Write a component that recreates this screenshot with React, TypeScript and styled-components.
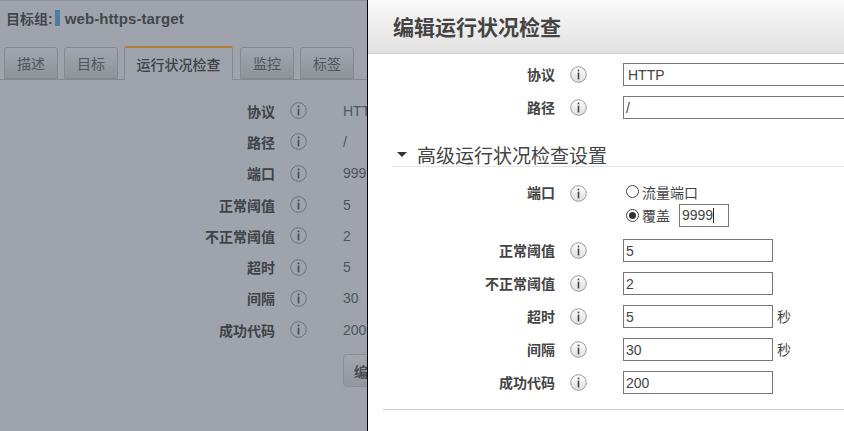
import React from 'react'
import styled, { createGlobalStyle } from 'styled-components'

const cjk = `"Liberation Sans", "Noto Sans CJK SC", sans-serif`

const Global = createGlobalStyle`
  html, body { margin: 0; padding: 0; }
  body { font-family: ${cjk}; background: #9fa4ac; overflow: hidden; }
`

const Screen = styled.div`
  position: relative;
  width: 844px;
  height: 431px;
  overflow: hidden;
  background: #9fa4ac;
`

const Page = styled.div`
  width: 367px;
  height: 431px;
  overflow: hidden;
  border-top: 1px solid #8e939b;
  box-sizing: border-box;
  color: #3e4146;
`

const GroupTitle = styled.div`
  display: flex;
  align-items: center;
  height: 34px;
  padding-left: 6px;
  font-size: 14px;
  font-weight: bold;
  color: #43464b;
`

const ColorChip = styled.span`
  width: 5px;
  height: 16px;
  margin: 0 5px 0 2px;
  background: #4f7ba3;
`

const GroupName = styled.span`
  font-size: 15px;
  letter-spacing: 0.1px;
`

const TabBar = styled.div`
  display: flex;
  align-items: flex-end;
  gap: 6px;
  width: 367px;
  height: 34px;
  margin-top: 11px;
  padding-left: 4px;
  box-sizing: border-box;
  border-bottom: 1px solid #84898f;
`

const Tab = styled.div<{ $active?: boolean }>`
  display: flex;
  align-items: center;
  justify-content: center;
  box-sizing: border-box;
  width: ${p => (p.$active ? '109px' : '54px')};
  height: ${p => (p.$active ? '34px' : '32px')};
  margin-bottom: ${p => (p.$active ? '-1px' : '0')};
  margin-right: ${p => (p.$active ? '1px' : '0')};
  font-size: 14px;
  font-weight: ${p => (p.$active ? 500 : 400)};
  color: ${p => (p.$active ? '#3e4146' : '#50545a')};
  background: ${p => (p.$active ? '#9fa4ac' : 'linear-gradient(#a1a6ae, #8f949b)')};
  border: 1px solid #84898f;
  border-top: ${p => (p.$active ? '2px solid #b07f35' : '1px solid #84898f')};
  border-bottom: ${p => (p.$active ? 'none' : '1px solid #84898f')};
  border-radius: 3px 3px 0 0;
`

const DetailList = styled.div`
  padding-top: 15px;
`

const DetailRow = styled.div`
  display: grid;
  grid-template-columns: 275px 46px 1fr;
  align-items: center;
  height: 31.3px;
`

const DetailLabel = styled.div`
  text-align: right;
  font-size: 14px;
  font-weight: bold;
  color: #3f4247;
`

const IconCell = styled.div`
  display: flex;
  justify-content: center;
`

const DetailValue = styled.div`
  padding-left: 22px;
  font-size: 14px;
  color: #50545a;
  white-space: nowrap;
`

const EditButton = styled.div`
  display: flex;
  align-items: center;
  box-sizing: border-box;
  width: 60px;
  height: 33px;
  margin: 9px 0 0 343px;
  padding-left: 10px;
  font-size: 14px;
  font-weight: bold;
  white-space: nowrap;
  color: #4a4d52;
  background: linear-gradient(#a3a8b0, #92979e);
  border: 1px solid #8a8f96;
  border-radius: 4px;
`

const Drawer = styled.div`
  position: absolute;
  top: 0;
  left: 367px;
  bottom: 0;
  width: 477px;
  box-sizing: border-box;
  background: #fff;
  border-left: 1px solid #000;
  overflow: hidden;
`

const DrawerHeader = styled.div`
  display: flex;
  align-items: center;
  box-sizing: border-box;
  height: 54px;
  padding: 0 0 2px 25px;
  background: linear-gradient(#fafafa, #e0e0e0);
  border-bottom: 1px solid #cfcfcf;
`

const DrawerTitle = styled.h1`
  margin: 0;
  font-size: 21px;
  font-weight: bold;
  color: #444;
`

const FormBlock = styled.div<{ $top?: number }>`
  padding-top: ${p => p.$top ?? 0}px;
`

const FormRow = styled.div`
  display: grid;
  grid-template-columns: 187px 46px 1fr;
  align-items: center;
  height: 33px;
`

const FormLabel = styled.div`
  padding-bottom: 2px;
  text-align: right;
  font-size: 14px;
  font-weight: bold;
  color: #444;
`

const FieldCell = styled.div`
  display: flex;
  align-items: center;
  gap: 4px;
  padding-left: 22px;
`

const TextField = styled.div<{ $wide?: boolean; $pad?: number }>`
  display: flex;
  align-items: center;
  box-sizing: border-box;
  flex: none;
  width: ${p => (p.$wide ? '260px' : '150px')};
  height: 23px;
  padding-left: ${p => p.$pad ?? 2}px;
  font-size: 14px;
  color: #444;
  background: #fff;
  border: 1px solid #767676;
`

const Unit = styled.span`
  padding-bottom: 2px;
  font-size: 14px;
  color: #444;
`

const SectionHead = styled.div`
  display: flex;
  align-items: center;
  gap: 10px;
  height: 26px;
  margin: 17px 0 0 25px;
  padding: 2px 0 0 4px;
  box-sizing: border-box;
  font-size: 19px;
  color: #444;
  border-bottom: 1px solid #e4e4e4;
`

const Triangle = styled.span`
  width: 0;
  height: 0;
  border-left: 5.5px solid transparent;
  border-right: 5.5px solid transparent;
  border-top: 5px solid #333;
`

const PortRow = styled.div`
  display: grid;
  grid-template-columns: 187px 46px 1fr;
  height: 55px;
  margin-top: 12px;
`

const PortLabel = styled(FormLabel)`
  padding: 3px 0 0;
`

const PortIconCell = styled(IconCell)`
  padding-top: 6px;
`

const RadioStack = styled.div`
  display: flex;
  flex-direction: column;
  padding: 1px 0 0 25px;
`

const RadioLine = styled.div<{ $short?: boolean }>`
  display: flex;
  align-items: center;
  gap: 3px;
  height: ${p => (p.$short ? '23px' : '24px')};
  font-size: 14px;
  color: #444;
`

const RadioDot = styled.span<{ $on?: boolean }>`
  position: relative;
  box-sizing: border-box;
  width: 13px;
  height: 13px;
  border: 1px solid #444;
  border-radius: 50%;
  background: #fff;

  &::after {
    content: '';
    display: ${p => (p.$on ? 'block' : 'none')};
    position: absolute;
    inset: 2px;
    border-radius: 50%;
    background: #333;
  }
`

const PortField = styled(TextField)`
  width: 50px;
  margin-left: 6px;
`

const Caret = styled.span`
  width: 1px;
  height: 15px;
  background: #222;
`

const Rule = styled.div`
  height: 1px;
  margin: 10px 0 0 15px;
  background: #cfcfcf;
`

const InfoIcon = ({ dim }: { dim?: boolean }) => (
  <svg width="17" height="17" viewBox="0 0 17 17">
    <defs>
      <linearGradient id="infoFill" x1="0" y1="0" x2="0" y2="1">
        <stop offset="0" stopColor="#ffffff" />
        <stop offset="1" stopColor="#dedede" />
      </linearGradient>
    </defs>
    <circle cx="8.5" cy="8.5" r="7.8" fill={dim ? 'none' : 'url(#infoFill)'} stroke={dim ? '#6c7077' : '#999'} />
    <rect x="7.7" y="3.6" width="1.6" height="1.7" fill={dim ? '#45484d' : '#444'} />
    <rect x="7.7" y="6.6" width="1.6" height="6.8" fill={dim ? '#45484d' : '#444'} />
  </svg>
)

const details = [
  ['协议', 'HTTP'],
  ['路径', '/'],
  ['端口', '9999'],
  ['正常阈值', '5'],
  ['不正常阈值', '2'],
  ['超时', '5'],
  ['间隔', '30'],
  ['成功代码', '200'],
]

const thresholds = [
  ['正常阈值', '5', ''],
  ['不正常阈值', '2', ''],
  ['超时', '5', '秒'],
  ['间隔', '30', '秒'],
  ['成功代码', '200', ''],
]

export default function App() {
  return (
    <Screen>
      <Global />
      <Page>
        <GroupTitle>
          目标组:<ColorChip /><GroupName>web-https-target</GroupName>
        </GroupTitle>
        <TabBar>
          <Tab>描述</Tab>
          <Tab>目标</Tab>
          <Tab $active>运行状况检查</Tab>
          <Tab>监控</Tab>
          <Tab>标签</Tab>
        </TabBar>
        <DetailList>
          {details.map(([label, value]) => (
            <DetailRow key={label}>
              <DetailLabel>{label}</DetailLabel>
              <IconCell><InfoIcon dim /></IconCell>
              <DetailValue>{value}</DetailValue>
            </DetailRow>
          ))}
        </DetailList>
        <EditButton>编辑运行状况检查</EditButton>
      </Page>

      <Drawer>
        <DrawerHeader>
          <DrawerTitle>编辑运行状况检查</DrawerTitle>
        </DrawerHeader>
        <FormBlock $top={4}>
          <FormRow>
            <FormLabel>协议</FormLabel>
            <IconCell><InfoIcon /></IconCell>
            <FieldCell><TextField $wide $pad={4}>HTTP</TextField></FieldCell>
          </FormRow>
          <FormRow>
            <FormLabel>路径</FormLabel>
            <IconCell><InfoIcon /></IconCell>
            <FieldCell><TextField $wide>/</TextField></FieldCell>
          </FormRow>
        </FormBlock>
        <SectionHead><Triangle />高级运行状况检查设置</SectionHead>
        <PortRow>
          <PortLabel>端口</PortLabel>
          <PortIconCell><InfoIcon /></PortIconCell>
          <RadioStack>
            <RadioLine $short><RadioDot />流量端口</RadioLine>
            <RadioLine><RadioDot $on />覆盖<PortField>9999<Caret /></PortField></RadioLine>
          </RadioStack>
        </PortRow>
        <FormBlock>
          {thresholds.map(([label, value, unit]) => (
            <FormRow key={label}>
              <FormLabel>{label}</FormLabel>
              <IconCell><InfoIcon /></IconCell>
              <FieldCell>
                <TextField>{value}</TextField>
                {unit && <Unit>{unit}</Unit>}
              </FieldCell>
            </FormRow>
          ))}
        </FormBlock>
        <Rule />
      </Drawer>
    </Screen>
  )
}
